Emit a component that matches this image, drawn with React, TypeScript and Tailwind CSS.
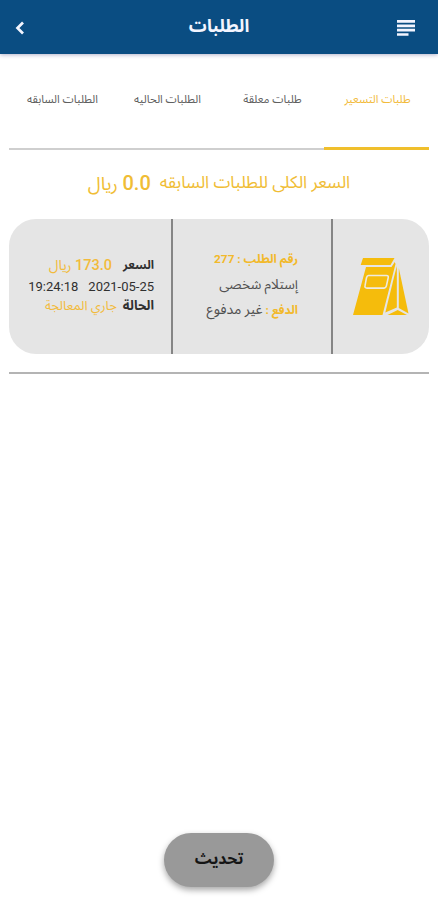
const tabs = [
  { id: "pricing", label: "طلبات التسعير", active: true },
  { id: "pending", label: "طلبات معلقة", active: false },
  { id: "current", label: "الطلبات الحاليه", active: false },
  { id: "previous", label: "الطلبات السابقه", active: false },
];

function Header() {
  return (
    <header className="relative z-10 grid h-[54px] grid-cols-[1fr_auto_1fr] items-center bg-[#0a4d82] text-[#f3f5ff] shadow-[0_1px_4px_rgba(40,40,110,0.35)]">
      <button type="button" aria-label="القائمة" className="ms-[23px] mt-[1px]">
        <svg width="18" height="16" viewBox="0 0 18 16" fill="currentColor">
          <path d="M0 0h18v2.8H0zM0 4.4h18v2.8H0zM0 8.8h18v2.8H0zM0 13.2h11.500v2.6H0z" />
        </svg>
      </button>
      <h1 className="whitespace-nowrap pb-0.5 text-[17.8px] font-bold">
        الطلبات
      </h1>
      <button
        type="button"
        aria-label="رجوع"
        className="me-[15px] mt-[1px] justify-self-end"
      >
        <svg
          width="10"
          height="14"
          viewBox="0 0 10 14"
          fill="none"
          stroke="currentColor"
          strokeWidth="2.7"
        >
          <path d="M8 1.500L2.500 7l5.500 5.500" />
        </svg>
      </button>
    </header>
  );
}

function OrderIcon() {
  return (
    <svg width="58" height="60" viewBox="0 0 58 60" fill="#f5bc0c">
      <path d="M11 0H42.500L38.500 7H8.700z" />
      <path d="M14 9H39.500L42.800 4L43.500 6L30.500 57H1z" />
      <path
        d="M16.500 17.500h18q2.200 0 1.700 2.200l-1.800 8.200q-.5 2.200-2.700 2.200H15q-2.500 0-2-2.200l1.500-8.200q.5-2.200 2-2.200z"
        fill="none"
        stroke="#eeeae0"
        strokeWidth="1.600"
      />
      <path d="M44.800 8V49.500L33.300 54.500z" />
      <path d="M46.800 10L56.500 55.500L46.800 50z" />
      <path d="M35.500 57L45.700 52L55 57z" />
    </svg>
  );
}

export default function App() {
  return (
    <div
      dir="rtl"
      className="flex h-[900px] w-[438px] flex-col overflow-hidden bg-white font-[Roboto,'Noto_Sans_Arabic','DejaVu_Sans',sans-serif]"
    >
      <Header />

      <nav className="mx-[9px] grid h-24 grid-cols-4 border-b-2 border-[#cfcfcf]">
        {tabs.map((tab) => (
          <button
            key={tab.id}
            type="button"
            className={`-mb-0.5 flex items-center justify-center whitespace-nowrap pl-0.5 text-[11.3px] ${
              tab.active
                ? "border-b-3 border-[#f0bf2c] text-[#f2bb3c]"
                : "border-b-3 border-transparent text-[#606060]"
            }`}
          >
            {tab.label}
          </button>
        ))}
      </nav>

      <p className="mt-[19px] flex h-7 items-center justify-center gap-[9px] whitespace-nowrap text-[17.1px] text-[#f0bd35]">
        <span>السعر الكلى للطلبات السابقه</span>
        <span className="text-[18.5px]">
          <span className="text-[20px] font-medium">0.0</span> ريال
        </span>
      </p>

      <section className="mx-[9px] mt-[22px] border-b-2 border-[#b4b4b4] pb-[18px]">
        <div className="flex h-[135px] overflow-hidden rounded-[27px] bg-[#e5e5e5]">
          <div className="flex w-24 items-center justify-center pt-[3px]">
            <OrderIcon />
          </div>
          <div className="flex w-[162px] flex-col items-start border-x-2 border-[#858585] pt-[28px] pr-[33px] text-[13.5px] leading-[25px] whitespace-nowrap text-[#505050]">
            <p className="text-[11.8px] font-bold text-[#f2b92b]">
              رقم الطلب : 277
            </p>
            <p>إستلام شخصى</p>
            <p>
              <span className="text-[11.8px] font-bold text-[#f2b92b]">
                الدفع :{" "}
              </span>
              <span className="text-[14px]">غير مدفوع</span>
            </p>
          </div>
          <div className="flex flex-1 flex-col items-start pt-[36px] pr-[17px] text-[12px] leading-5 whitespace-nowrap text-[#303030]">
            <p className="flex gap-[11px]">
              <b>السعر</b>
              <span className="text-[14px] text-[#f2bb3c]">
                <span className="text-[14.5px] font-medium">173.0</span> ريال
              </span>
            </p>
            <p className="flex gap-[10px] pt-px text-[13px]">
              <span dir="ltr">2021-05-25</span>
              <span dir="ltr">19:24:18</span>
            </p>
            <p className="-mt-px flex gap-[6px]">
              <b className="text-[13px]">الحالة</b>
              <span className="text-[13px] text-[#f2bb3c]">جاري المعالجة</span>
            </p>
          </div>
        </div>
      </section>

      <div className="mt-auto flex justify-center pb-[13px]">
        <button
          type="button"
          className="h-[54px] w-[110px] rounded-full bg-[#999] pb-0.5 text-[15.8px] font-bold text-[#151515] shadow-[0_3px_6px_rgba(0,0,0,0.35)]"
        >
          تحديث
        </button>
      </div>
    </div>
  );
}
